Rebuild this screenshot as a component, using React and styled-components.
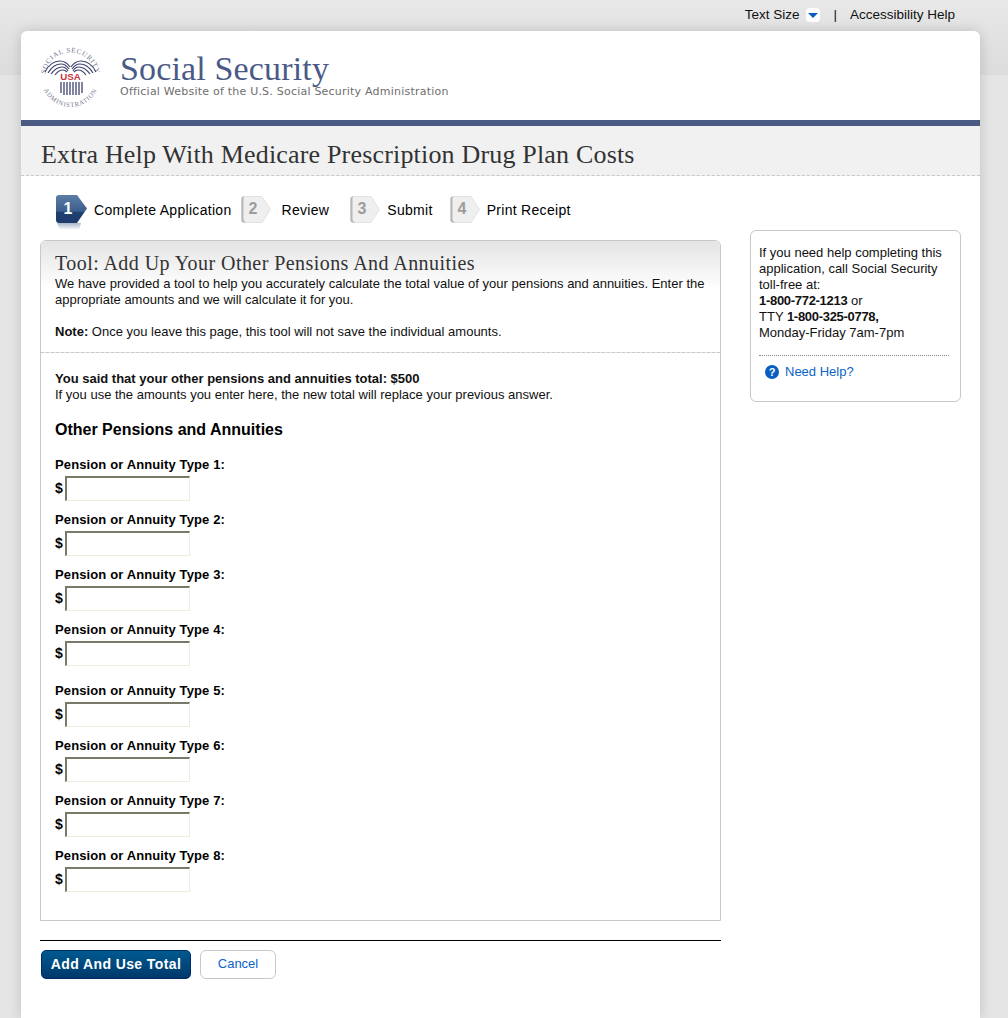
import React from 'react'
import styled, { createGlobalStyle } from 'styled-components'

const GlobalStyle = createGlobalStyle`
  html, body {
    margin: 0;
    padding: 0;
  }
  body {
    background: #e5e5e5;
    font-family: "Liberation Sans", Arial, sans-serif;
    font-size: 13px;
    line-height: 16px;
    color: #000;
  }
`

const serif = `"Liberation Serif", "Times New Roman", serif`

const Page = styled.div`
  height: 1018px;
  overflow: hidden;
  background: linear-gradient(#e8e8e8 0, #dcdcdc 75px, #e5e5e5 75px);
`

const TopBar = styled.div`
  height: 30px;
  margin-bottom: 1px;
  width: 955px;
  display: flex;
  justify-content: flex-end;
  align-items: center;
  color: #111;
  font-size: 13.5px;
`

const TextSizeToggle = styled.span`
  width: 14px;
  height: 14px;
  margin: 0 13px 0 7px;
  border-radius: 4px;
  background: #fff;
  display: flex;
  align-items: center;
  justify-content: center;
`

const Caret = styled.span`
  width: 0;
  height: 0;
  border-left: 5px solid transparent;
  border-right: 5px solid transparent;
  border-top: 5px solid #0a5ec0;
`

const Pipe = styled.span`
  margin-right: 13px;
`

const Card = styled.div`
  width: 959px;
  height: 987px;
  margin-left: 21px;
  background: #fff;
  border-radius: 6px 6px 0 0;
  box-shadow: 0 0 13px rgba(0, 0, 0, 0.16);
`

const Masthead = styled.header`
  height: 89px;
  padding-left: 19px;
  display: flex;
  align-items: center;
  gap: 18px;
  box-sizing: border-box;
`

const Brand = styled.div`
  margin-top: -2px;
`

const BrandName = styled.div`
  font-family: ${serif};
  font-size: 34px;
  line-height: 36px;
  color: #4a5a86;
  letter-spacing: 0.15px;
`

const BrandTag = styled.div`
  margin-top: -1px;
  font-family: "DejaVu Sans", Verdana, sans-serif;
  font-size: 11px;
  line-height: 12px;
  color: #6e6e6e;
  letter-spacing: 0.22px;
`

const TitleBand = styled.div`
  height: 56px;
  box-sizing: border-box;
  padding: 16px 0 0 20px;
  border-top: 6px solid #4a5a82;
  border-bottom: 1px dashed #c8c8c8;
  background: #f1f1f1;
`

const PageTitle = styled.h1`
  margin: 0;
  font-family: ${serif};
  font-weight: 400;
  font-size: 26px;
  line-height: 26px;
  color: #333;
  letter-spacing: 0.18px;
`

const Columns = styled.div`
  display: flex;
  padding-left: 19px;
`

const MainColumn = styled.main`
  width: 681px;
`

const Steps = styled.ol`
  list-style: none;
  margin: 0;
  padding: 19px 0 0 16px;
  height: 64px;
  box-sizing: border-box;
  display: flex;
`

const Step = styled.li`
  display: flex;
  gap: ${p => p.$gap}px;
  margin-right: ${p => p.$after}px;
  height: 29px;
  align-items: flex-start;
`

const StepLabel = styled.span`
  font-size: 14px;
  line-height: 30px;
  letter-spacing: 0.3px;
  color: #000;
`

const BadgeSvg = styled.svg`
  display: block;
  margin-top: ${p => (p.$active ? 0 : 1)}px;
`

const Panel = styled.section`
  height: 681px;
  box-sizing: border-box;
  border: 1px solid #c8c8c8;
  border-radius: 6px 6px 0 0;
`

const PanelIntro = styled.div`
  height: 112px;
  box-sizing: border-box;
  padding: 11px 14px 0;
  border-bottom: 1px dashed #c8c8c8;
  background: linear-gradient(#e4e4e4 0, #ffffff 48px);
  border-radius: 6px 6px 0 0;
`

const PanelTitle = styled.h2`
  margin: 0 0 2px;
  font-family: ${serif};
  font-weight: 400;
  font-size: 20px;
  line-height: 22px;
  color: #333;
  letter-spacing: 0.44px;
`

const Copy = styled.p`
  margin: 0 0 16px;
  font-size: 13px;
  line-height: 16px;
  color: #111;
`

const PanelBody = styled.div`
  padding: 18px 14px 0;
`

const SubHeading = styled.h3`
  margin: 18px 0 18px;
  font-size: 16px;
  line-height: 18px;
  font-weight: 700;
`

const FieldGroup = styled.div`
  display: flex;
  flex-direction: column;
  gap: 7px;
  margin-bottom: 13px;
`

const Field = styled.label`
  display: block;
  height: 48px;
  font-size: 13px;
  font-weight: 700;
  line-height: 16px;
  letter-spacing: 0.12px;
`

const AmountRow = styled.span`
  display: flex;
  align-items: center;
  margin-top: 3px;
`

const Dollar = styled.span`
  width: 10px;
  font-size: 14px;
  font-weight: 700;
  margin-top: -2px;
`

const AmountInput = styled.input`
  width: 125px;
  height: 25px;
  box-sizing: border-box;
  margin: 0;
  padding: 0 2px;
  border-style: solid;
  border-width: 2px 1px 1px 2px;
  border-color: #7a7868 #eeebdf #eeebdf #7a7868;
  background: #fff;
  outline: none;
`

const Actions = styled.div`
  margin-top: 19px;
  padding-top: 9px;
  border-top: 1px solid #000;
  display: flex;
  gap: 9px;
  padding-left: 1px;
`

const PrimaryButton = styled.button`
  width: 150px;
  height: 29px;
  padding: 0 0 2px;
  border: 1px solid #002a6a;
  border-radius: 5px;
  background: linear-gradient(#005a90, #00386c);
  color: #fff;
  font-family: inherit;
  font-size: 14px;
  font-weight: 700;
  letter-spacing: 0.4px;
`

const SecondaryButton = styled.button`
  width: 76px;
  height: 29px;
  padding: 0 0 2px;
  border: 1px solid #c8c8c8;
  border-radius: 6px;
  background: #fff;
  color: #0a64c8;
  font-family: inherit;
  font-size: 13px;
`

const Aside = styled.aside`
  width: 211px;
  height: 172px;
  box-sizing: border-box;
  margin: 54px 0 0 29px;
  padding: 14px 11px 0 8px;
  border: 1px solid #c8c8c8;
  border-radius: 6px;
  font-size: 13px;
  line-height: 16px;
  color: #111;
`

const Phone = styled.strong`
  letter-spacing: -0.3px;
`

const HelpLine = styled.div`
  margin-top: 14px;
  padding: 8px 0 0 6px;
  border-top: 1px dotted #888;
  display: flex;
  align-items: center;
  gap: 6px;
  color: #0a64c8;
`

const HelpDot = styled.span`
  width: 14px;
  height: 14px;
  border-radius: 50%;
  background: #0a5ec0;
  color: #fff;
  font-size: 11px;
  font-weight: 700;
  line-height: 14px;
  text-align: center;
`

function Seal() {
  const wing = (
    <>
      <path d="M5 27 C8 21 13 16 20 16 C25 16 28 19 30 22" />
      <path d="M8 28 C11 23 15 19 21 19 C25 19 27 21 29 24" />
      <path d="M11 29 C14 25 18 22 22 22 C25 22 27 24 28 26" />
      <path d="M15 30 C17 27 20 25 23 25 C25 25 26 26 27 27" />
    </>
  )
  return (
    <svg width="62" height="62" viewBox="0 0 62 62">
      <defs>
        <path id="sealTop" d="M5 33 A25.500 25.500 0 1 1 56 33" />
        <path id="sealBottom" d="M1.500 33 A29 29 0 0 0 59.500 33" />
      </defs>
      <text fontFamily="Liberation Serif, serif" fontSize="7" fill="#77778f" letterSpacing="0.7" textAnchor="middle">
        <textPath href="#sealTop" startOffset="50%">SOCIAL SECURITY</textPath>
      </text>
      <text fontFamily="Liberation Serif, serif" fontSize="6.500" fill="#77778f" letterSpacing="0.8" textAnchor="middle">
        <textPath href="#sealBottom" startOffset="50%">ADMINISTRATION</textPath>
      </text>
      <g fill="none" stroke="#3e4470" strokeWidth="1.200">
        {wing}
        <g transform="matrix(-1 0 0 1 61 0)">{wing}</g>
      </g>
      <text x="30.500" y="35" textAnchor="middle" fontFamily="Liberation Sans, sans-serif" fontWeight="700" fontSize="9.700" fill="#c8323c">USA</text>
      <path
        d="M21 37V48M24 37V50M27 37V50M30 37V50M33 37V50M36 37V50M39 37V50M42 37V48"
        stroke="#3e4470"
        strokeWidth="1.300"
      />
    </svg>
  )
}

function StepBadge({ number, active }) {
  const w = active ? 31 : 30
  return (
    <BadgeSvg $active={active} width={w} height={active ? 36 : 28} viewBox={`0 0 ${w} ${active ? 36 : 28}`}>
      <defs>
        <linearGradient id="activeFill" x1="0" y1="0" x2="0" y2="1">
          <stop offset="0" stopColor="#5d7da6" />
          <stop offset="0.58" stopColor="#3a5e8c" />
          <stop offset="0.62" stopColor="#1f3f70" />
          <stop offset="1" stopColor="#1c3b6b" />
        </linearGradient>
        <linearGradient id="glow" x1="0" y1="0" x2="0" y2="1">
          <stop offset="0" stopColor="#a8b6c8" />
          <stop offset="1" stopColor="#ffffff" />
        </linearGradient>
      </defs>
      {active ? (
        <>
          <path d="M1 28 H25 L23 35 H4 Z" fill="url(#glow)" />
          <path d="M3 0 H21 L31 13.500 L21 28 H3 Q0 28 0 25 V3 Q0 0 3 0 Z" fill="url(#activeFill)" />
        </>
      ) : (
        <>
          <path d="M3 .5 H21 L29.500 13.500 L21 26.500 H3 Q.5 26.500 .5 24 V3 Q.5 .5 3 .5 Z" fill="#efefef" stroke="#e2e2e2" />
          <path d="M3 .5 Q.5 .5 .5 3 V24 Q.5 26.500 3 26.500 H5 Q2.500 25 2.500 23 V3 Z" fill="#b8b8b8" />
        </>
      )}
      <text
        x="12"
        y={active ? 19 : 18}
        textAnchor="middle"
        fontFamily="Liberation Sans, sans-serif"
        fontWeight="700"
        fontSize="16"
        fill={active ? '#fff' : '#9c9c9c'}
      >
        {number}
      </text>
    </BadgeSvg>
  )
}

const firstGroup = [1, 2, 3, 4]
const secondGroup = [5, 6, 7, 8]

function AmountField({ n }) {
  return (
    <Field>
      Pension or Annuity Type {n}:
      <AmountRow>
        <Dollar>$</Dollar>
        <AmountInput type="text" />
      </AmountRow>
    </Field>
  )
}

export default function App() {
  return (
    <Page>
      <GlobalStyle />
      <TopBar>
        <span>Text Size</span>
        <TextSizeToggle><Caret /></TextSizeToggle>
        <Pipe>|</Pipe>
        <span>Accessibility Help</span>
      </TopBar>
      <Card>
        <Masthead>
          <Seal />
          <Brand>
            <BrandName>Social Security</BrandName>
            <BrandTag>Official Website of the U.S. Social Security Administration</BrandTag>
          </Brand>
        </Masthead>
        <TitleBand>
          <PageTitle>Extra Help With Medicare Prescription Drug Plan Costs</PageTitle>
        </TitleBand>
        <Columns>
          <MainColumn>
            <Steps>
              <Step $gap={7} $after={9}><StepBadge number="1" active /><StepLabel>Complete Application</StepLabel></Step>
              <Step $gap={11} $after={21}><StepBadge number="2" /><StepLabel>Review</StepLabel></Step>
              <Step $gap={7} $after={17}><StepBadge number="3" /><StepLabel>Submit</StepLabel></Step>
              <Step $gap={7} $after={0}><StepBadge number="4" /><StepLabel>Print Receipt</StepLabel></Step>
            </Steps>
            <Panel>
              <PanelIntro>
                <PanelTitle>Tool: Add Up Your Other Pensions And Annuities</PanelTitle>
                <Copy>
                  We have provided a tool to help you accurately calculate the total value of your pensions and annuities. Enter the appropriate amounts and we will calculate it for you.
                </Copy>
                <Copy><strong>Note:</strong> Once you leave this page, this tool will not save the individual amounts.</Copy>
              </PanelIntro>
              <PanelBody>
                <Copy>
                  <strong>You said that your other pensions and annuities total: $500</strong>
                  <br />
                  If you use the amounts you enter here, the new total will replace your previous answer.
                </Copy>
                <SubHeading>Other Pensions and Annuities</SubHeading>
                <FieldGroup>
                  {firstGroup.map(n => <AmountField key={n} n={n} />)}
                </FieldGroup>
                <FieldGroup>
                  {secondGroup.map(n => <AmountField key={n} n={n} />)}
                </FieldGroup>
              </PanelBody>
            </Panel>
            <Actions>
              <PrimaryButton>Add And Use Total</PrimaryButton>
              <SecondaryButton>Cancel</SecondaryButton>
            </Actions>
          </MainColumn>
          <Aside>
            If you need help completing this application, call Social Security toll-free at:
            <br />
            <Phone>1-800-772-1213</Phone> or
            <br />
            TTY <Phone>1-800-325-0778,</Phone>
            <br />
            Monday-Friday 7am-7pm
            <HelpLine><HelpDot>?</HelpDot>Need Help?</HelpLine>
          </Aside>
        </Columns>
      </Card>
    </Page>
  )
}
